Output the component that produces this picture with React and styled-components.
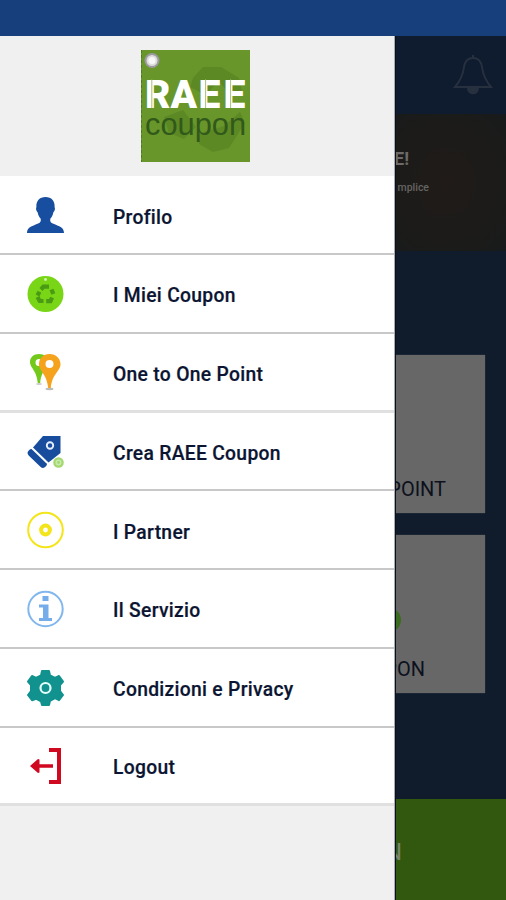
import React from "react";
import styled, { createGlobalStyle } from "styled-components";

const GlobalStyle = createGlobalStyle`
  * { box-sizing: border-box; }
  body { margin: 0; background: #101b2b; font-family: Roboto, sans-serif; }
`;

const Screen = styled.div`
  width: 506px;
  height: 900px;
  display: flex;
  flex-direction: column;
  overflow: hidden;
`;

const StatusBar = styled.div`
  height: 36px;
  flex: none;
  background: #163f7b;
`;

const Body = styled.div`
  flex: 1;
  display: flex;
  min-height: 0;
`;

const Drawer = styled.nav`
  width: 395px;
  flex: none;
  background: #f0f0f0;
  border-right: 1px solid #a9abae;
`;

const DrawerHeader = styled.header`
  height: 140.4px;
  padding: 14px 0 0 141px;
`;

const Menu = styled.ul`
  margin: 0;
  padding: 0;
  list-style: none;
`;

const MenuItem = styled.li`
  height: 78.75px;
  display: flex;
  align-items: center;
  padding: 1px 0 0 27px;
  background: #fff;
  border-bottom: ${(p) => (p.$soft ? "3px solid #e0e0e0" : "2px solid #c8c8c8")};
  color: #0b1532;
  font-size: 19.3px;
  font-weight: 500;
  white-space: nowrap;
`;

const IconBox = styled.span`
  width: 86px;
  height: 38px;
  flex: none;
`;

const Label = styled.span`
  letter-spacing: 0.3px;
  padding-top: 3.5px;
  -webkit-text-stroke: 0.2px #0b1532;
`;

const Dimmed = styled.main`
  width: 111px;
  flex: none;
  display: flex;
  flex-direction: column;
  overflow: hidden;
  background: #101b2b;
  border-left: 1px solid #07101b;
`;

const TopBar = styled.div`
  height: 78px;
  flex: none;
  padding: 17px 0 0 56px;
  background: #0f1b2e;
`;

const Banner = styled.section`
  height: 137px;
  flex: none;
  display: flex;
  flex-direction: column;
  align-items: flex-end;
  background: radial-gradient(ellipse at 45% 50%, #201b19, #1b1b19 70%, #171a1c);
`;

const BannerTitle = styled.div`
  margin: 33px 97px 0 0;
  color: #6c6b69;
  font-size: 18px;
  line-height: 24px;
  font-weight: 700;
`;

const BannerText = styled.div`
  margin: 10px 77px 0 0;
  color: #656461;
  font-size: 10.5px;
  font-weight: 500;
  line-height: 14px;
`;

const Cards = styled.section`
  flex: 1;
  display: flex;
  flex-direction: column;
  gap: 22px;
  padding: 104px 21px 0 0;
`;

const Card = styled.article`
  height: 158px;
  flex: none;
  display: flex;
  flex-direction: column;
  justify-content: flex-end;
  align-items: flex-end;
  overflow: hidden;
  padding: 0 ${(p) => p.$right}px 11px 0;
  background: #676767;
  box-shadow: 0 0 1px #53606a;
  color: #0c111d;
  font-size: 20px;
  line-height: 26px;
`;

const CardDot = styled.i`
  width: 24px;
  height: 24px;
  margin: 0 24px 24px 0;
  border-radius: 50%;
  background: #3c6c20;
`;

const Footer = styled.footer`
  height: 101px;
  flex: none;
  display: flex;
  justify-content: flex-end;
  padding: 37px 104px 0 0;
  background: #32580f;
  color: #78856c;
  font-size: 24px;
  line-height: 32px;
`;

const Logo = () => (
  <svg width="109" height="112" viewBox="0 0 109 112">
    <rect width="109" height="112" fill="#69962a" />
    <g fill="#557f22" opacity=".55">
      <path d="M52 28 62 17 80 17 98 28 101 42 89 45 78 31 64 45 49 37Z" />
      <path d="M23 67 42 60 55 77 43 89 28 83Z" />
      <path d="M59 83 83 76 99 62 104 73 88 98 72 102 58 94Z" />
    </g>
    <path d="M.5 0V112" stroke="#517b21" strokeDasharray="3 2" />
    <text x="4 29.5 57.5 82.5" y="57.5" fill="#fff" fontFamily="Roboto" fontWeight="900" fontSize="39">RAEE</text>
    <path d="M10.8 29V58M64.6 29V58M89.6 29V58" stroke="#8fb060" strokeWidth=".8" />
    <text x="4" y="85" textLength="101" lengthAdjust="spacingAndGlyphs" fill="#30591a" fontFamily="Liberation Sans" fontSize="32">coupon</text>
    <circle cx="11" cy="10.5" r="6.5" fill="#ddd" stroke="#9b9aa0" strokeWidth="2" />
    <circle cx="11" cy="10.5" r="3.5" fill="#f8f8f8" />
  </svg>
);

const Bell = () => (
  <svg width="42" height="44" viewBox="0 0 42 44" fill="none" stroke="#27303f" strokeWidth="2">
    <path d="M21 2v3M3 34C9 27 11 22 12 14 13 8 16 5 21 5s8 3 9 9c1 8 3 13 9 20H3Z" />
    <path d="M16 35c0 7 10 7 10 0" fill="#27303f" />
  </svg>
);

const icons = {
  profile: (
    <path fill="#184e9f" d="M18.5 1C12.5 1 9 5 9.4 11c-.9 2 0 4 1.3 5.5.5 3 1.5 4.5 3 6.2.6 4-1.5 4.4-6.1 6.2C3.5 30.6 0 32 0 37h37c0-5-3.5-6.4-7.6-8.1-4.6-1.8-6.7-2.2-6.1-6.2 1.5-1.7 2.5-3.2 3-6.2 1.3-1.5 2.2-3.5 1.3-5.5C28 5 24.5 1 18.5 1Z" />
  ),
  coupon: (
    <>
      <circle cx="18.5" cy="19" r="18" fill="#78d616" />
      <circle cx="18.5" cy="4.5" r="1.4" fill="#d5f3b6" />
      <g fill="none" stroke="#4a9a14" strokeWidth="4.2">
        <path d="M14 14.5 16.5 11.7H22" />
        <path d="M24.5 14.5 26.3 19" />
        <path d="m25 22.5-1.5 3.7h-4.3" />
        <path d="M16.5 26h-3.8L10.5 22" />
        <path d="m10.5 20.5 2-3.8" />
      </g>
    </>
  ),
  pins: (
    <>
      <ellipse cx="12" cy="31" rx="3" ry="1" fill="#ccc" />
      <ellipse cx="22.5" cy="36" rx="4" ry="1.2" fill="#bbb" />
      <path fill="#72c91b" fillRule="evenodd" d="M12 1C6.5 1 3 4.5 3 9c0 6 6.7 8 7.8 21h2.4C14.3 17 21 15 21 9c0-4.5-3.5-8-9-8Zm0 5a3.5 3.5 0 1 1 0 7 3.5 3.5 0 0 1 0-7Z" />
      <path fill="#f5a21d" d="M22.5 1C16 1 12 5.5 12 11.3c0 6.8 8 9.7 9.2 23.7h2.6C25 21 33.5 18.1 33.5 11.3 33.5 5.5 29 1 22.5 1Z" />
      <circle cx="22.5" cy="11" r="4" fill="#fff" />
    </>
  ),
  tag: (
    <>
      <path fill="#184d9e" d="M16 3h17.5v17L21.5 29.5 6 14.5Z" />
      <path fill="none" stroke="#184d9e" strokeWidth="7.5" strokeLinecap="round" d="M4.5 20 16 31" />
      <path d="m5 15.5 15 14.5" stroke="#fff" strokeWidth="1.3" />
      <circle cx="23" cy="12.5" r="3.2" fill="#184d9e" stroke="#e5efff" strokeWidth="1.9" />
      <circle cx="31.5" cy="29.5" r="5.3" fill="#a5d873" />
      <circle cx="31.5" cy="29.5" r="2.2" fill="none" stroke="#c8ebaa" strokeWidth="1.5" />
    </>
  ),
  partner: (
    <g fill="none" stroke="#f3e51a">
      <circle cx="18.5" cy="19" r="17.3" strokeWidth="2" />
      <circle cx="18.5" cy="19" r="4.4" strokeWidth="4" />
    </g>
  ),
  info: (
    <>
      <circle cx="18.5" cy="19" r="17.2" fill="none" stroke="#82b6ee" strokeWidth="2" />
      <path fill="#75adeb" d="M15.5 6h6v5h-6zM12 14.5h9.5V28H25v3H12v-3h4V17.5h-4Z" />
    </>
  ),
  gear: (
    <>
      <path fill="#12928e" stroke="#12928e" strokeWidth="2" strokeLinejoin="round" d="M15 2h7l1 4.4 5 2.6L32 7l4 5.5-3 3.5v6l3 4-4 5.2-4-2-5 2.6L22 36h-7l-1-3.7L9 29.700l-4 1.500L1 26l3-4v-6l-3-3.500L5 7l4 2 5-2.600Z" />
      <circle cx="18.5" cy="19" r="5" fill="#12928e" stroke="#e3ffff" strokeWidth="2.2" />
    </>
  ),
  logout: (
    <>
      <path fill="none" stroke="#d00820" strokeWidth="4" d="M22 3h10v32H22" />
      <path fill="#d00820" d="m3 19 8-7 1.5.5v4.8H26v3.4H12.5v4.8l-1.5.5Z" />
    </>
  ),
};

const items = [
  { label: "Profilo", icon: "profile" },
  { label: "I Miei Coupon", icon: "coupon" },
  { label: "One to One Point", icon: "pins", soft: true },
  { label: "Crea RAEE Coupon", icon: "tag" },
  { label: "I Partner", icon: "partner" },
  { label: "Il Servizio", icon: "info" },
  { label: "Condizioni e Privacy", icon: "gear" },
  { label: "Logout", icon: "logout", soft: true },
];

export default function App() {
  return (
    <Screen>
      <GlobalStyle />
      <StatusBar />
      <Body>
        <Drawer>
          <DrawerHeader><Logo /></DrawerHeader>
          <Menu>
            {items.map(({ label, icon, soft }) => (
              <MenuItem key={label} $soft={soft}>
                <IconBox><svg width="37" height="38" viewBox="0 0 37 38">{icons[icon]}</svg></IconBox>
                <Label>{label}</Label>
              </MenuItem>
            ))}
          </Menu>
        </Drawer>
        <Dimmed>
          <TopBar><Bell /></TopBar>
          <Banner>
            <BannerTitle>E!</BannerTitle>
            <BannerText>mplice</BannerText>
          </Banner>
          <Cards>
            <Card $right={39}>POINT</Card>
            <Card $right={60}><CardDot />PON</Card>
          </Cards>
          <Footer>N</Footer>
        </Dimmed>
      </Body>
    </Screen>
  );
}
